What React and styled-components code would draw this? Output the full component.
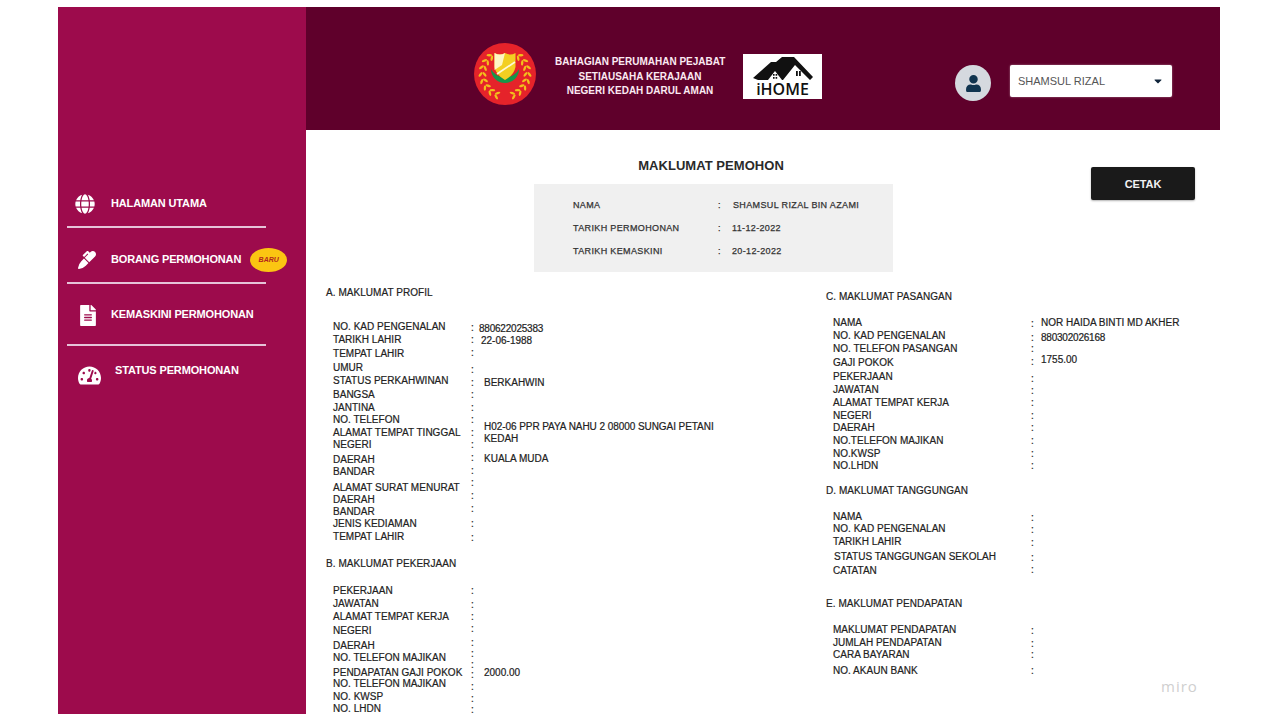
import React from 'react';
import styled, { createGlobalStyle } from 'styled-components';
import { FaGlobe, FaMarker, FaFileAlt, FaTachometerAlt, FaUser, FaCaretDown } from 'react-icons/fa';

const GlobalStyle = createGlobalStyle`
  html, body {
    margin: 0;
    padding: 0;
    background: #fff;
    font-family: "Liberation Sans", Arial, sans-serif;
  }
`;

const Page = styled.div`
  width: 1280px;
  height: 720px;
  overflow: hidden;
  padding: 7px 60px 6px 58px;
  box-sizing: border-box;
  position: relative;
`;
const Frame = styled.div`
  display: flex;
  height: 707px;
`;

/* sidebar */
const Sidebar = styled.nav`
  width: 248px;
  flex: none;
  background: #9d0b4c;
  padding: 183px 40px 0 9px;
  box-sizing: border-box;
`;
const NavItem = styled.div`
  height: ${(p) => p.$h}px;
  display: flex;
  align-items: flex-start;
  border-bottom: ${(p) => (p.$line ? '2px solid #e6c3d8' : 'none')};
  box-sizing: border-box;
  width: 199px;
  color: #fff;
`;
const NavIcon = styled.span`
  width: ${(p) => p.$w}px;
  flex: none;
  display: flex;
  justify-content: center;
  padding-top: ${(p) => p.$top}px;
  font-size: ${(p) => p.$size}px;
  line-height: 1;
  margin-left: ${(p) => p.$left}px;
`;
const NavText = styled.span`
  font-size: 11px;
  font-weight: 700;
  letter-spacing: -0.14px;
  line-height: 13px;
  white-space: nowrap;
  margin-left: ${(p) => p.$left}px;
  padding-top: ${(p) => p.$top}px;
`;
const Badge = styled.i`
  width: 37px;
  height: 24px;
  flex: none;
  margin: 20px 0 0 9px;
  border-radius: 50%;
  background: #fbc512;
  color: #b3261e;
  font-size: 7px;
  font-weight: 700;
  line-height: 24px;
  text-align: center;
`;

/* main */
const Main = styled.main`
  width: 914px;
  flex: none;
`;
const Header = styled.header`
  height: 123px;
  background: #5f002b;
  padding-left: 168px;
  box-sizing: border-box;
  display: flex;
  align-items: flex-start;
`;
const Crest = styled.svg`
  width: 62px;
  height: 62px;
  flex: none;
  margin-top: 36px;
`;
const Agency = styled.div`
  width: 170px;
  margin: 48px 0 0 19px;
  color: #fbeaf2;
  font-size: 10px;
  font-weight: 700;
  line-height: 14.5px;
  text-align: center;
  white-space: nowrap;
`;
const HomeLogo = styled.div`
  width: 79px;
  height: 45px;
  flex: none;
  margin: 47px 0 0 18px;
  background: #fff;
  display: flex;
  flex-direction: column;
  align-items: center;
  color: #111;
`;
const HomeRoof = styled.svg`
  width: 60px;
  height: 24px;
  margin-top: 3px;
  flex: none;
`;
const HomeName = styled.span`
  font-family: "Open Sans", sans-serif;
  font-size: 16px;
  line-height: 16px;
  font-weight: 600;
`;
const Avatar = styled.div`
  width: 36px;
  height: 36px;
  flex: none;
  margin: 58px 0 0 133px;
  border-radius: 50%;
  background: #d5d9df;
  color: #10344f;
  font-size: 17px;
  display: flex;
  align-items: center;
  justify-content: center;
`;
const UserSelect = styled.div`
  width: 162px;
  height: 32px;
  flex: none;
  margin: 58px 0 0 19px;
  background: #fff;
  border-radius: 2px;
  box-shadow: 0 0 2px rgba(255, 255, 255, 0.5);
  padding: 0 8px;
  box-sizing: border-box;
  display: flex;
  align-items: center;
  justify-content: space-between;
  color: #555;
  font-size: 11px;
  svg { color: #10243a; font-size: 12px; }
`;

const Top = styled.div`
  display: flex;
  align-items: flex-start;
  padding-left: 228px;
`;
const Summary = styled.section`
  width: 359px;
  flex: none;
`;
const Title = styled.h1`
  margin: 0;
  height: 54px;
  padding: 28px 5px 0 0;
  box-sizing: border-box;
  font-size: 13px;
  letter-spacing: 0.05px;
  line-height: 16px;
  font-weight: 700;
  color: #2a2a2a;
  text-align: center;
`;
const SummaryBox = styled.div`
  background: #f0f0f0;
  height: 88px;
  padding: 15px 0 0 39px;
  box-sizing: border-box;
`;
const SummaryRow = styled.div`
  display: grid;
  grid-template-columns: 145px 14px auto;
  height: 23px;
  font-size: 9px;
  line-height: 12px;
  letter-spacing: 0.36px;
  color: #333;
  -webkit-text-stroke: 0.25px #333;
  justify-content: start;
`;
const SummaryValue = styled.span`
  padding-left: ${(p) => p.$x || 0}px;
`;
const PrintButton = styled.button`
  width: 104px;
  height: 33px;
  flex: none;
  margin: 37px 0 0 198px;
  border: 0;
  border-radius: 2px;
  background: #1a1a1a;
  box-shadow: 0 1px 2px rgba(0, 0, 0, 0.3);
  color: #f2f2f2;
  font-family: inherit;
  font-size: 11px;
  letter-spacing: -0.1px;
  font-weight: 700;
  padding: 0;
`;

const Columns = styled.div`
  display: grid;
  grid-template-columns: 500px 1fr;
  padding-left: 20px;
`;
const Column = styled.div`
  padding-top: ${(p) => p.$top}px;
`;
const SectionTitle = styled.h2`
  margin: 0;
  height: ${(p) => p.$h}px;
  font-size: 10px;
  letter-spacing: 0.05px;
  line-height: 12px;
  font-weight: 400;
  color: #222;
  -webkit-text-stroke: 0.2px #222;
  white-space: nowrap;
`;
const Rows = styled.div`
  height: ${(p) => p.$h}px;
  padding-left: 7px;
`;
const Row = styled.div`
  display: grid;
  grid-template-columns: ${(p) => p.$label}px ${(p) => p.$colon}px 1fr;
  height: ${(p) => p.$h}px;
  font-size: 10px;
  line-height: 12px;
  color: #222;
  -webkit-text-stroke: 0.2px #222;
`;
const Label = styled.span`
  white-space: nowrap;
  letter-spacing: 0.02px;
  margin-left: ${(p) => p.$x || 0}px;
`;
const Colon = styled.span`
  margin-top: ${(p) => p.$dy || 0}px;
  line-height: ${(p) => (p.$double ? '10px' : '12px')};
  white-space: pre;
`;
const Value = styled.span`
  margin-top: ${(p) => p.$dy || 0}px;
  margin-left: ${(p) => p.$x || 0}px;
  width: 250px;
  letter-spacing: ${(p) => p.$ls || 0}px;
`;
const Watermark = styled.span`
  position: absolute;
  left: 1161px;
  top: 676px;
  font-family: "Open Sans", sans-serif;
  font-size: 15px;
  letter-spacing: 1px;
  color: #cfcfcf;
`;

const sectionA = [
  { t: 'NO. KAD PENGENALAN', h: 13, c: 1, v: '880622025383', vy: 2, vx: -5, ls: -0.22 },
  { t: 'TARIKH LAHIR', h: 14, c: 0, v: '22-06-1988', vy: 1, vx: -3 },
  { t: 'TEMPAT LAHIR', h: 14, c: -1 },
  { t: 'UMUR', h: 13, c: 2 },
  { t: 'STATUS PERKAHWINAN', h: 14, c: 2, v: 'BERKAHWIN', vy: 2 },
  { t: 'BANGSA', h: 13 },
  { t: 'JANTINA', h: 12 },
  { t: 'NO. TELEFON', h: 13 },
  { t: 'ALAMAT TEMPAT TINGGAL', h: 12, v: 'H02-06 PPR PAYA NAHU 2 08000 SUNGAI PETANI KEDAH', vy: -6, ls: -0.06 },
  { t: 'NEGERI', h: 15 },
  { t: 'DAERAH', h: 12, c: -2, vy: -1, v: 'KUALA MUDA' },
  { t: 'BANDAR', h: 16, c: -1 },
  { t: 'ALAMAT SURAT MENURAT', h: 12, c: -5 },
  { t: 'DAERAH', h: 12, c: -4 },
  { t: 'BANDAR', h: 12, c: -3 },
  { t: 'JENIS KEDIAMAN', h: 13 },
  { t: 'TEMPAT LAHIR', h: 13, c: 1 },
];
const sectionB = [
  { t: 'PEKERJAAN', h: 13 },
  { t: 'JAWATAN', h: 13, c: 1 },
  { t: 'ALAMAT TEMPAT KERJA', h: 14 },
  { t: 'NEGERI', h: 15, c: -2 },
  { t: 'DAERAH', h: 12, c: -3 },
  { t: 'NO. TELEFON MAJIKAN', h: 15, c: -4 },
  { t: 'PENDAPATAN GAJI POKOK', h: 11, c: -7, double: true, v: '2000.00' },
  { t: 'NO. TELEFON MAJIKAN', h: 13, c: 3 },
  { t: 'NO. KWSP', h: 12, c: 2 },
  { t: 'NO. LHDN', h: 12, c: 1 },
];
const sectionC = [
  { t: 'NAMA', h: 13, c: 1, v: 'NOR HAIDA BINTI MD AKHER' },
  { t: 'NO. KAD PENGENALAN', h: 13, c: 2, v: '880302026168', vy: 2, ls: -0.22 },
  { t: 'NO. TELEFON PASANGAN', h: 14 },
  { t: 'GAJI POKOK', h: 14, c: -1, v: '1755.00', vy: -3 },
  { t: 'PEKERJAAN', h: 13, c: 2 },
  { t: 'JAWATAN', h: 13, c: 1 },
  { t: 'ALAMAT TEMPAT KERJA', h: 13 },
  { t: 'NEGERI', h: 12 },
  { t: 'DAERAH', h: 13 },
  { t: 'NO.TELEFON MAJIKAN', h: 13 },
  { t: 'NO.KWSP', h: 12 },
  { t: 'NO.LHDN', h: 12 },
];
const sectionD = [
  { t: 'NAMA', h: 12, c: 1 },
  { t: 'NO. KAD PENGENALAN', h: 13, c: 1 },
  { t: 'TARIKH LAHIR', h: 15, c: 1 },
  { t: 'STATUS TANGGUNGAN SEKOLAH', h: 14, c: 1, x: 1 },
  { t: 'CATATAN', h: 12, c: -1 },
];
const sectionE = [
  { t: 'MAKLUMAT PENDAPATAN', h: 13, c: 1 },
  { t: 'JUMLAH PENDAPATAN', h: 12, c: 1 },
  { t: 'CARA BAYARAN', h: 16 },
  { t: 'NO. AKAUN BANK', h: 12 },
];

function InfoRows({ rows, label, colon, height }) {
  return (
    <Rows $h={height}>
      {rows.map((r, i) => (
        <Row key={i} $h={r.h} $label={label} $colon={colon}>
          <Label $x={r.x}>{r.t}</Label>
          <Colon $dy={r.c} $double={r.double}>{r.double ? ':\n:' : ':'}</Colon>
          {r.v && <Value $dy={r.vy} $x={r.vx} $ls={r.ls}>{r.v}</Value>}
        </Row>
      ))}
    </Rows>
  );
}

// wreath stations, degrees from the crest's horizontal on the right side
const wreathAngles = [-50, -33, -16, 1, 18, 35, 52, 69];

function wreathLeaf(angle, radius, tilt, side, key) {
  const rad = (angle * Math.PI) / 180;
  const x = Math.cos(rad) * radius * side;
  const y = Math.sin(rad) * radius;
  const rot = side * (angle + 90 + tilt);
  return (
    <ellipse
      key={key}
      cx={x}
      cy={y}
      rx="1.2"
      ry="2.8"
      fill="#f2c01c"
      transform={`rotate(${rot} ${x} ${y})`}
    />
  );
}

function KedahCrest() {
  return (
    <Crest viewBox="-31 -31 62 62">
      <circle r="31" fill="#e5232a" />
      {[1, -1].map((side) =>
        wreathAngles.map((a) => [
          wreathLeaf(a, 20.5, 128, side, `${side}i${a}`),
          wreathLeaf(a, 24.5, 52, side, `${side}o${a}`),
        ])
      )}
      <path d="M-14 -5 A 14 14 0 0 0 14 -5 A 15 13 0 0 1 -14 -5 Z" fill="#17964a" />
      <path d="M-10.5 -21 Q-5 -18 0 -21 Q5 -18 10.5 -21 L10.5 -7 Q9 1 0 6 Q-9 1 -10.5 -7 Z" fill="#f3cf22" />
      <path d="M-10.5 -21 Q-5 -18 0 -21 L-3 -9 L-10.5 -4 Z" fill="#fff6c4" />
      <path d="M-8 0 L10 -12" stroke="#fff8d8" strokeWidth="1.6" />
    </Crest>
  );
}

export default function App() {
  return (
    <Page>
      <GlobalStyle />
      <Frame>
        <Sidebar>
          <NavItem $h={38} $line>
            <NavIcon $w={20} $left={8} $top={4} $size={20}><FaGlobe /></NavIcon>
            <NavText $left={16} $top={7}>HALAMAN UTAMA</NavText>
          </NavItem>
          <NavItem $h={56} $line>
            <NavIcon $w={20} $left={10} $top={23} $size={18}><FaMarker /></NavIcon>
            <NavText $left={14} $top={25}>BORANG PERMOHONAN</NavText>
            <Badge>BARU</Badge>
          </NavItem>
          <NavItem $h={62} $line>
            <NavIcon $w={20} $left={11} $top={21} $size={21}><FaFileAlt /></NavIcon>
            <NavText $left={13} $top={24}>KEMASKINI PERMOHONAN</NavText>
          </NavItem>
          <NavItem $h={40}>
            <NavIcon $w={24} $left={10} $top={18} $size={23}><FaTachometerAlt /></NavIcon>
            <NavText $left={14} $top={18}>STATUS PERMOHONAN</NavText>
          </NavItem>
        </Sidebar>
        <Main>
          <Header>
            <KedahCrest />
            <Agency>
              BAHAGIAN PERUMAHAN PEJABAT<br />
              SETIAUSAHA KERAJAAN<br />
              NEGERI KEDAH DARUL AMAN
            </Agency>
            <HomeLogo>
              <HomeRoof viewBox="0 0 60 24">
                <path d="M0 21 L18 5 L23 5 L29 0 L41 0 L60 20 L57 23 L42 8 L30 23 L13 23 L5 23 Z" fill="#111" />
                <path d="M15 23 L22 14 L29 23 Z" fill="#fff" />
                <path d="M20 17 h1.6 v1.8 h-1.6 z M22.6 17 h1.6 v1.8 h-1.6 z M20 20 h1.6 v1.8 h-1.6 z M22.6 20 h1.6 v1.8 h-1.6 z" fill="#111" />
                <path d="M43 14 h1.8 v5 h-1.8 z M46 14 h1.8 v5 h-1.8 z" fill="#111" />
              </HomeRoof>
              <HomeName>iHOME</HomeName>
            </HomeLogo>
            <Avatar><FaUser /></Avatar>
            <UserSelect>
              SHAMSUL RIZAL
              <FaCaretDown />
            </UserSelect>
          </Header>
          <Top>
            <Summary>
              <Title>MAKLUMAT PEMOHON</Title>
              <SummaryBox>
                <SummaryRow><span>NAMA</span><span>:</span><SummaryValue $x={1}>SHAMSUL RIZAL BIN AZAMI</SummaryValue></SummaryRow>
                <SummaryRow><span>TARIKH PERMOHONAN</span><span>:</span><SummaryValue>11-12-2022</SummaryValue></SummaryRow>
                <SummaryRow><span>TARIKH KEMASKINI</span><span>:</span><SummaryValue>20-12-2022</SummaryValue></SummaryRow>
              </SummaryBox>
            </Summary>
            <PrintButton>CETAK</PrintButton>
          </Top>
          <Columns>
            <Column $top={15}>
              <SectionTitle $h={34}>A. MAKLUMAT PROFIL</SectionTitle>
              <InfoRows rows={sectionA} label={138} colon={13} height={237} />
              <SectionTitle $h={27}>B. MAKLUMAT PEKERJAAN</SectionTitle>
              <InfoRows rows={sectionB} label={138} colon={13} height={120} />
            </Column>
            <Column $top={19}>
              <SectionTitle $h={26}>C. MAKLUMAT PASANGAN</SectionTitle>
              <InfoRows rows={sectionC} label={198} colon={10} height={168} />
              <SectionTitle $h={26}>D. MAKLUMAT TANGGUNGAN</SectionTitle>
              <InfoRows rows={sectionD} label={198} colon={10} height={87} />
              <SectionTitle $h={26}>E. MAKLUMAT PENDAPATAN</SectionTitle>
              <InfoRows rows={sectionE} label={198} colon={10} height={60} />
            </Column>
          </Columns>
        </Main>
      </Frame>
      <Watermark>miro</Watermark>
    </Page>
  );
}
